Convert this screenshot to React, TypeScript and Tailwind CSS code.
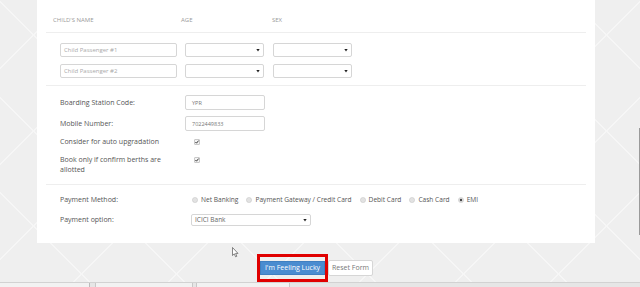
import React from 'react';

const font = { fontFamily: '"Open Sans", "Liberation Sans", sans-serif' };

function Caret() {
  return (
    <svg width="4" height="3" viewBox="0 0 4 3" className="shrink-0">
      <path d="M0.3 0 L3.7 0 L2 2.6 Z" fill="#222" />
    </svg>
  );
}

function FakeSelect({ w, text }: { w: string; text?: string }) {
  return (
    <div className={`${w} h-full flex items-center justify-between border border-[#d6d6d6] rounded-[2px] bg-white pl-[3px] pr-[3px] text-[6.5px] text-[#666]`}>
      <span>{text ?? ''}</span>
      <Caret />
    </div>
  );
}

function Check() {
  return (
    <svg width="6" height="6" viewBox="0 0 6 6">
      <rect x="0.5" y="0.5" width="5" height="5" rx="0.5" fill="#f4f4f4" stroke="#aaa" strokeWidth="0.6" />
      <path d="M1.4 3 L2.5 4.2 L4.6 1.6" stroke="#222" strokeWidth="0.9" fill="none" />
    </svg>
  );
}

function Radio({ on }: { on?: boolean }) {
  return (
    <svg width="6" height="6" viewBox="0 0 6 6" className="shrink-0">
      <circle cx="3" cy="3" r="2.6" fill="#e2e2e2" stroke="#c4c4c4" strokeWidth="0.5" />
      {on && <circle cx="3" cy="3" r="1.2" fill="#444" />}
    </svg>
  );
}

const methods = ['Net Banking', 'Payment Gateway / Credit Card', 'Debit Card', 'Cash Card', 'EMI'];

export default function App() {
  return (
    <div
      style={font}
      className="relative w-[640px] h-[287px] overflow-hidden bg-[#efefef] [background-image:repeating-linear-gradient(45deg,transparent_0_66px,#f6f6f6_66px_67.5px),repeating-linear-gradient(-45deg,transparent_0_66px,#f6f6f6_66px_67.5px)]"
    >
      <div className="ml-[37px] w-[558px] bg-white px-[9px] pb-[17px] text-[#555]">
        {/* children header */}
        <div className="h-[33px] flex items-end pb-[8px] border-b border-[#eeeeee] text-[6px] text-[#9a9a9a] uppercase leading-[8px]">
          <div className="w-[135px] pl-[7px]">Child's Name</div>
          <div className="w-[91px]">Age</div>
          <div>Sex</div>
        </div>

        <div className="pt-[10px] pb-[7px] border-b border-[#eeeeee] flex flex-col gap-[7px]">
          {['Child Passenger #1', 'Child Passenger #2'].map((p) => (
            <div key={p} className="flex h-[14px] pl-[14px]">
              <div className="w-[117px] h-full flex items-center border border-[#d6d6d6] rounded-[2px] pl-[3px] text-[6px] text-[#aaa]">
                {p}
              </div>
              <div className="ml-[8px] h-full">
                <FakeSelect w="w-[79px]" />
              </div>
              <div className="ml-[9px] h-full">
                <FakeSelect w="w-[79px]" />
              </div>
            </div>
          ))}
        </div>

        {/* boarding details */}
        <div className="pt-[9px] pb-[9px] border-b border-[#eeeeee] text-[7px] leading-[10px]">
          <div className="flex items-center h-[15px]">
            <div className="w-[139px] pl-[14px]">Boarding Station Code:</div>
            <div className="w-[80px] h-full flex items-center border border-[#d6d6d6] rounded-[2px] pl-[6px] text-[5.5px] text-[#777]">YPR</div>
          </div>
          <div className="flex items-center h-[15px] mt-[6px]">
            <div className="w-[139px] pl-[14px]">Mobile Number:</div>
            <div className="w-[80px] h-full flex items-center border border-[#d6d6d6] rounded-[2px] pl-[6px] text-[5.5px] text-[#777]">7022449833</div>
          </div>
          <div className="flex items-center h-[10px] mt-[6px]">
            <div className="w-[148px] pl-[14px]">Consider for auto upgradation</div>
            <Check />
          </div>
          <div className="flex items-start mt-[8px]">
            <div className="w-[148px] pl-[14px]">
              Book only if confirm berths are
              <br />
              allotted
            </div>
            <div className="h-[10px] flex items-center">
              <Check />
            </div>
          </div>
        </div>

        {/* payment */}
        <div className="pt-[10px] text-[7px] leading-[10px]">
          <div className="flex items-center h-[10px]">
            <div className="w-[146px] pl-[14px]">Payment Method:</div>
            <div className="flex items-center gap-[8px] text-[6.6px]">
              {methods.map((m) => (
                <div key={m} className="flex items-center gap-[3px]">
                  <Radio on={m === 'EMI'} />
                  <span>{m}</span>
                </div>
              ))}
            </div>
          </div>
          <div className="flex items-center h-[12px] mt-[9px]">
            <div className="w-[145px] pl-[14px]">Payment option:</div>
            <FakeSelect w="w-[120px]" text="ICICI Bank" />
          </div>
        </div>
      </div>

      {/* actions */}
      <div className="mt-[11px] pl-[257px] flex items-center">
        <div className="border-[3px] border-[#e00000] px-[0px] py-[4px]">
          <div className="w-[65px] h-[14px] bg-[#4a8cd0] flex items-center justify-center text-white text-[7px] border border-[#3f7fc0]">
            I'm Feeling Lucky
          </div>
        </div>
        <div className="w-[45px] h-[16px] bg-white border border-[#d6d6d6] rounded-[2px] flex items-center justify-center text-[7px] text-[#777]">
          Reset Form
        </div>
      </div>

      {/* cut-off strip */}
      <div className="h-[7px] border-t border-[#d2d2d2] bg-[#e6e6e6] flex">
        <div className="w-[90px] bg-[#f2f2f2] border-r border-[#bbb]" />
        <div className="w-[5px]" />
        <div className="w-[98px] bg-[#f2f2f2] border-l border-r border-[#c8c8c8]" />
        <div className="w-[3px]" />
        <div className="w-[94px] bg-[#f2f2f2] border-l border-r border-[#c8c8c8]" />
      </div>

      {/* mouse cursor */}
      <svg className="absolute left-[232px] top-[247px]" width="7" height="11" viewBox="0 0 7 11">
        <path d="M0.5 0.5 L0.5 8.5 L2.3 6.8 L3.6 9.8 L4.8 9.3 L3.6 6.4 L6 6.4 Z" fill="#fff" stroke="#555" strokeWidth="0.7" />
      </svg>

      {/* scrollbar */}
      <div className="absolute right-0 top-[128px] w-[1px] h-[107px] bg-[#9a9a9a]" />
    </div>
  );
}
